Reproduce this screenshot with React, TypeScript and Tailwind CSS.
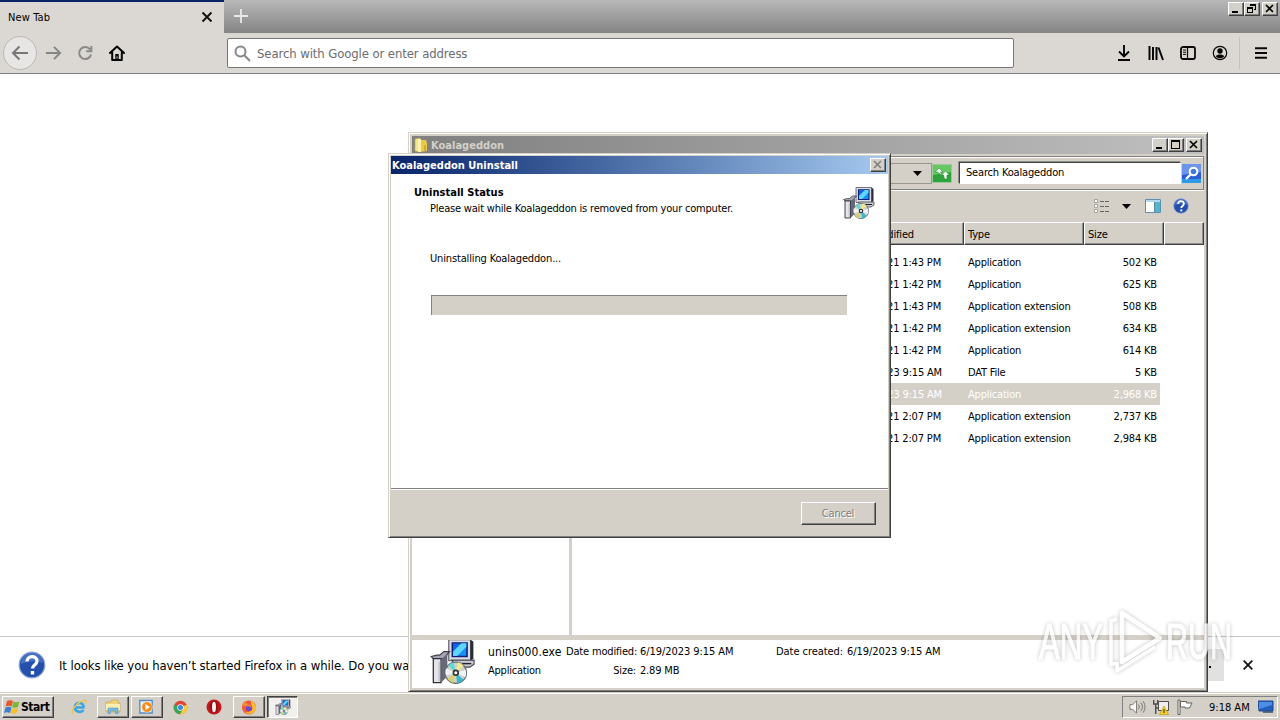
import React from "react";

const raised = "border border-t-white border-l-white border-r-[#404040] border-b-[#404040] shadow-[inset_-1px_-1px_0_#808080]";

function InstallerIcon({ className }: { className: string }) {
  return (
    <svg viewBox="0 0 32 32" className={className}>
      <path d="M13 .5h15.500v15H13z" fill="#dcdce4" stroke="#55555f" strokeWidth=".8" />
      <path d="M28.500.500l2 1.500v12l-2 1.500z" fill="#2c2c38" />
      <path d="M15.500 2.800h10.500v9.700H15.500z" fill="#1c8df4" stroke="#10207a" strokeWidth="1.100" />
      <path d="M16 12V9l6-6h3.500v2.500L19 12z" fill="#5fd6ff" />
      <path d="M16 3.300h5L16 8.500z" fill="#1560e6" />
      <path d="M15 15h16v3l-3 2h-9z" fill="#c8c8d0" stroke="#44444c" strokeWidth=".8" />
      <path d="M22 17.500h7" stroke="#20202a" />
      <path d="M.5 12.500l4-1h2l3-2.500h4l-4 5H2z" fill="#a6a6b4" stroke="#3c3c48" strokeWidth=".8" />
      <path d="M8 14l4-3.500v16l-4 4z" fill="#686878" />
      <path d="M2 14h5.500v17H2z" fill="#e4e4ea" stroke="#30303a" strokeWidth=".9" />
      <path d="M5.500 16H7v14H5.500z" fill="#a8a8b4" opacity=".5" />
      <circle cx="18" cy="24" r="7.600" fill="#cfd2cf" stroke="#687078" strokeWidth=".9" />
      <path d="M18 24L12.500 18.800A7.500 7.500 0 0 1 16.500 16.700z" fill="#62d8d0" />
      <path d="M18 24L19.500 16.600A7.500 7.500 0 0 1 23.500 19z" fill="#f1e98c" />
      <path d="M18 24L25 22A7.500 7.500 0 0 1 24.800 27z" fill="#eef5f8" />
      <path d="M18 24L23.500 29A7.500 7.500 0 0 1 19 31.400z" fill="#38b8cc" />
      <path d="M18 24L16 31.200A7.500 7.500 0 0 1 12 28.500z" fill="#d8cf68" />
      <path d="M18 24L11 26A7.500 7.500 0 0 1 11 21z" fill="#f2f2f2" />
      <circle cx="18" cy="24" r="1.700" fill="#fff" stroke="#333" strokeWidth="1.200" />
    </svg>
  );
}

function HelpIcon({ className }: { className: string }) {
  return (
    <svg viewBox="0 0 28 28" className={className}>
      <circle cx="14" cy="14" r="12.800" fill="#2450ac" stroke="#8fa6d6" strokeWidth="1.200" />
      <path d="M3 13a11 11 0 0 1 22-1c-8-3-15-2-22 1z" fill="#5b84cf" opacity=".6" />
      <path d="M9 10.500c0-6.500 10-6.500 10-.5 0 4-4.500 4-4.500 7.500" fill="none" stroke="#fff" strokeWidth="3.200" />
      <path d="M12.800 20h3.400v3.400h-3.400z" fill="#fff" />
    </svg>
  );
}

function WinButton({ kind, className = "" }: { kind: "min" | "max" | "restore" | "close"; className?: string }) {
  return (
    <div className={`flex h-[14px] w-4 items-center justify-center bg-[#d4d0c8] ${raised} ${className}`}>
      <svg viewBox="0 0 14 12" className="h-3 w-3.5 shrink-0" fill="none" stroke="currentColor" shapeRendering="crispEdges">
        {kind === "min" && <path d="M3 9h6" strokeWidth="2" />}
        {kind === "max" && <><path d="M2.500 2.500h8v7h-8z" /><path d="M2 2h9" strokeWidth="2" /></>}
        {kind === "restore" && <><path d="M5.500 1.500h5v5h-2M2.500 4.500h5v5h-5z" /><path d="M5 2h6M2 5h6" strokeWidth="1.500" /></>}
        {kind === "close" && <path d="M3 2l7 7M10 2l-7 7" strokeWidth="1.700" shapeRendering="auto" />}
      </svg>
    </div>
  );
}

function Browser() {
  return (
    <div className="flex h-[692px] flex-col bg-white">
      <div className="flex h-[33px] shrink-0 bg-linear-to-b from-[#b8b8b8] to-[#858585]">
        <div className="flex w-[224px] items-center justify-between border-t-2 border-[#0a246a] bg-[#dbd8d3] pr-[11px] pb-px pl-2">
          <span className="pt-0.5 text-[11px] tracking-[0.13px]">New Tab</span>
          <svg viewBox="0 0 12 12" className="h-3 w-3" stroke="#111" strokeWidth="1.900"><path d="M1.500 1.500l9 9M10.500 1.500l-9 9" /></svg>
        </div>
        <svg viewBox="0 0 14 14" className="mt-[9px] ml-[10px] h-3.5 w-3.5" stroke="#e8e8e8" strokeWidth="1.800"><path d="M7 0v14M0 7h14" /></svg>
        <div className="mt-[2px] mr-[2px] ml-auto flex">
          <WinButton kind="min" />
          <WinButton kind="restore" />
          <WinButton kind="close" className="ml-0.5" />
        </div>
      </div>
      <div className="flex h-[41px] shrink-0 items-center border-b border-[#828080] bg-[#dbd8d3]">
        <div className="ml-[3px] flex h-[34px] w-[34px] items-center justify-center rounded-full border border-[#bab8b5] bg-[#e8e6e4]">
          <svg viewBox="0 0 18 16" className="h-4 w-[18px]" fill="none" stroke="#777" strokeWidth="2"><path d="M17 8H2M8.500 1.500L2 8l6.500 6.500" /></svg>
        </div>
        <svg viewBox="0 0 18 16" className="ml-2 h-4 w-[17px]" fill="none" stroke="#858585" strokeWidth="2"><path d="M1 8h15M9.500 1.500L16 8l-6.500 6.500" /></svg>
        <svg viewBox="0 0 16 16" className="ml-[15px] h-4 w-4" fill="none" stroke="#898989" strokeWidth="2"><path d="M13 4.500A6 6 0 1 0 14 9.500M14.300 1v5.200H9.200" /></svg>
        <svg viewBox="0 0 16 16" className="ml-4 h-4 w-4" fill="none" stroke="#050505" strokeWidth="2" strokeLinejoin="round"><path d="M1 8l7-6.500L15 8M3.200 7.500V15h9.600V7.500" strokeLinecap="round" /><path d="M6.300 9h3.400v6H6.300z" fill="#050505" stroke="none" /><path d="M8 11.500v2" stroke="#dbd8d3" strokeWidth="1" /></svg>
        <div className="ml-[102px] flex h-[30px] w-[787px] items-center rounded-[2px] border border-[#77777a] bg-white pl-1.5">
          <svg viewBox="0 0 17 17" className="h-[17px] w-[17px]" fill="none" stroke="#85858a" strokeWidth="2"><circle cx="6.500" cy="6.500" r="5" /><path d="M10 10l6 6" /></svg>
          <span className="ml-1.5 pt-0.5 text-[13px] tracking-[-0.1px] text-[#6b6b70]">Search with Google or enter address</span>
        </div>
        <svg viewBox="0 0 14 16" className="ml-[103px] h-4 w-3.5" fill="none" stroke="#080808" strokeWidth="1.900"><path d="M7 0v11M2 6.500l5 5 5-5M1 15h12" /></svg>
        <svg viewBox="0 0 16 16" className="ml-[17px] h-4 w-4" fill="none" stroke="#080808" strokeWidth="2"><path d="M1.500 1v14M5 2v13M8.500 2v13M10.500 2.500L15 15" strokeWidth="2" /></svg>
        <svg viewBox="0 0 16 16" className="ml-4 h-4 w-4" fill="none" stroke="#080808" strokeWidth="1.800"><rect x="1" y="2" width="14" height="12" rx="2" /><path d="M7.500 2v12" strokeWidth="1.200" /><path d="M3 5h3M3 7.200h3M3 9.400h3" strokeWidth="1" /></svg>
        <svg viewBox="0 0 16 16" className="ml-4 h-4 w-4"><circle cx="8" cy="8" r="6.700" fill="none" stroke="#080808" strokeWidth="1.200" /><circle cx="8" cy="6" r="2.700" fill="#080808" /><path d="M3.800 11.200c1-2.200 7.400-2.200 8.400 0-2 2.800-6.400 2.800-8.400 0z" fill="#080808" /></svg>
        <div className="ml-[11px] h-8 w-px bg-[#c5c2be]" />
        <svg viewBox="0 0 12 12" className="ml-[15px] h-3 w-3" stroke="#080808" strokeWidth="1.900"><path d="M0 1.200h12M0 6h12M0 10.800h12" /></svg>
      </div>
      <div className="flex-1" />
      <div className="flex h-14 items-center border-t border-[#c6c6c6]">
        <HelpIcon className="ml-[18px] h-7 w-7" />
        <span className="ml-[13px] pt-0.5 text-[13px] tracking-[-0.09px] whitespace-nowrap">It looks like you haven’t started Firefox in a while. Do you want</span>
        <div className="mr-[19px] ml-auto flex h-8 w-14 items-center justify-end bg-[#e1e1e1] pr-[13px]">
          <div className="h-0.5 w-0.5 translate-y-0.5 bg-black" />
        </div>
        <svg viewBox="0 0 10 10" className="mr-[27px] h-2.5 w-2.5" stroke="#111" strokeWidth="1.700"><path d="M.7.700l8.600 8.600M9.300.700L.7 9.300" /></svg>
      </div>
    </div>
  );
}

const files = [
  ["8/22/2021 1:43 PM", "Application", "502 KB"],
  ["8/22/2021 1:42 PM", "Application", "625 KB"],
  ["8/22/2021 1:43 PM", "Application extension", "508 KB"],
  ["8/22/2021 1:42 PM", "Application extension", "634 KB"],
  ["8/22/2021 1:42 PM", "Application", "614 KB"],
  ["6/19/2023 9:15 AM", "DAT File", "5 KB"],
  ["6/19/2023 9:15 AM", "Application", "2,968 KB"],
  ["8/22/2021 2:07 PM", "Application extension", "2,737 KB"],
  ["8/22/2021 2:07 PM", "Application extension", "2,984 KB"],
];

const headCell = "flex items-center border-t border-l border-t-white border-l-white border-r border-b border-r-[#404040] border-b-[#404040] shadow-[inset_-1px_-1px_0_#909090] pt-[3px]";

function Explorer() {
  return (
    <div className="absolute top-[132px] left-[408px] flex h-[560px] w-[800px] flex-col border border-t-[#d4d0c8] border-r-[#404040] border-b-[#404040] border-l-[#d4d0c8] bg-[#d4d0c8] text-[11px] tracking-[-0.17px] shadow-[inset_1px_1px_0_#fff,inset_-1px_-1px_0_#808080]">
      <div className="mx-[3px] mt-[3px] flex h-[18px] shrink-0 items-center bg-linear-to-r from-[#808080] to-[#c0c0c0] pr-[2px] pl-[2px]">
        <svg viewBox="0 0 14 16" className="h-4 w-3.5"><path d="M1 2l5-1v14l-5-1z" fill="#f7e38b" stroke="#c7a53d" strokeWidth=".6" /><path d="M6 3h6l1 3v8l-7 1z" fill="#e9c94c" /><path d="M4 2h3v13H4z" fill="#fff3b0" /><path d="M10 8h2v6h-2z" fill="#d2ab31" /></svg>
        <span className="ml-[3px] pt-[2px] font-bold tracking-[0.02px] text-[#d4d0c8]">Koalageddon</span>
        <div className="ml-auto flex">
          <WinButton kind="min" />
          <WinButton kind="max" />
          <WinButton kind="close" className="ml-0.5" />
        </div>
      </div>
      <div className="mx-[3px] mt-0.5 flex h-[34px] shrink-0 items-center justify-end border border-t-[#808080] border-r-[#808080] border-b-[#808080] border-l-white shadow-[0_1px_0_#fff,inset_0_1px_0_#fff]">
        <div className="flex h-[21px] w-[400px] items-center justify-end border border-[#9a9791] pr-[9px]">
          <svg viewBox="0 0 9 5" className="h-[5px] w-[9px]"><path d="M0 0h9L4.500 5z" /></svg>
        </div>
        <svg viewBox="0 0 20 19" className="h-[19px] w-5"><path d="M.5.500h19v18H.5z" fill="#2fa33b" stroke="#9bc79b" /><path d="M1 1h18v7L1 11z" fill="#68c765" /><path d="M7 4l4 4H8.500l2 4-5-4H3z" fill="#f4fff4" stroke="#2a8a34" strokeWidth=".6" /><path d="M13.500 7l4 4H15v4h-2.500l-1-4H9.500z" fill="#f4fff4" stroke="#2a8a34" strokeWidth=".6" /></svg>
        <div className="ml-[7px] flex h-[22px] w-[222px] items-center border border-t-[#404040] border-r-white border-b-white border-l-[#404040] bg-white pt-px pl-[6px] shadow-[-1px_-1px_0_#909090]">Search Koalageddon</div>
        <svg viewBox="0 0 19 19" className="mr-[2px] ml-px h-[19px] w-[19px]"><path d="M0 0h19v19H0z" fill="#2a5ed4" /><path d="M0 0h19v8L0 11z" fill="#6c94ea" /><path d="M0 15h19v4H0z" fill="#2f9ae6" /><circle cx="11.500" cy="7.500" r="3.800" fill="#3f78e0" stroke="#fff" strokeWidth="2" /><path d="M8.500 10.500L4 15" stroke="#fff" strokeWidth="2.400" /></svg>
      </div>
      <div className="flex h-8 shrink-0 items-center justify-end pr-[18px]">
        <svg viewBox="0 0 16 14" className="h-3.5 w-4" fill="none"><path d="M.5.500h3v3h-3zM.5 5.500h3v3h-3zM.5 10.500h3v3h-3z" fill="#fff" stroke="#a6a49f" /><path d="M6 2.500h9M6 7.500h9M6 12.500h9" stroke="#66645f" strokeDasharray="4 1" /></svg>
        <svg viewBox="0 0 9 5" className="ml-[12px] h-[5px] w-[9px]"><path d="M0 0h9L4.500 5z" /></svg>
        <svg viewBox="0 0 16 14" className="ml-[14px] h-3.5 w-4"><path d="M.5.500h15v13H.5z" fill="#fff" stroke="#5d8fb2" /><path d="M10 3h5v10h-5z" fill="#4db7cc" /><path d="M1 1h14v2H1z" fill="#b8d8ee" /><path d="M9.500 3v10" stroke="#62849a" /></svg>
        <HelpIcon className="ml-[12px] h-4 w-4" />
      </div>
      <div className="mx-[3px] flex min-h-0 flex-1">
        <div className="w-[157px] bg-white" />
        <div className="w-[3px] bg-[#d4d0c8]" />
        <div className="flex-1 bg-white">
          <div className="flex h-[23px] bg-[#d4d0c8]">
            <div className={`${headCell} w-[252px] pl-1`}>Name</div>
            <div className={`${headCell} w-[140px] pl-[21px]`}>Date modified</div>
            <div className={`${headCell} w-[120px] pl-[3px]`}>Type</div>
            <div className={`${headCell} w-[80px] pl-[3px]`}>Size</div>
            <div className={`${headCell} flex-1`} />
          </div>
          <div className="mt-[6px] w-[588px]">
            {files.map(([date, type, size], i) => (
              <div key={i} className={`flex h-[22px] items-center pt-0.5 ${i === 6 ? "bg-[#d4d0c8] text-white" : ""}`}>
                <span className={`w-[369px] text-right whitespace-nowrap ${date.endsWith("AM") ? "translate-x-px" : ""}`}>{date}</span>
                <span className="ml-[27px] flex-1 tracking-[-0.2px] whitespace-nowrap">{type}</span>
                <span className="mr-[3px]">{size}</span>
              </div>
            ))}
          </div>
        </div>
      </div>
      <div className="mx-[3px] mb-[3px] flex h-[53px] shrink-0 overflow-hidden border-t-[5px] border-[#d4d0c8] bg-white">
        <InstallerIcon className="mt-[-1px] ml-[18px] h-[45px] w-[46px] shrink-0" />
        <div className="ml-[12px] w-[78px] whitespace-nowrap">
          <div className="mt-[3px] h-[18px] text-[12px] leading-[18px] tracking-[0.1px]">unins000.exe</div>
          <div className="h-[19px] leading-[19px] tracking-[-0.22px]">Application</div>
        </div>
        <div className="w-[70px] text-right whitespace-nowrap">
          <div className="mt-[3px] h-[18px] leading-[18px]">Date modified:</div>
          <div className="h-[19px] leading-[19px]">Size:</div>
        </div>
        <div className="ml-[4px] w-[136px] whitespace-nowrap">
          <div className="mt-[3px] h-[18px] leading-[18px] tracking-[-0.06px]">6/19/2023 9:15 AM</div>
          <div className="h-[19px] leading-[19px]">2.89 MB</div>
        </div>
        <div className="mt-[3px] w-[71px] leading-[18px] tracking-[-0.06px] whitespace-nowrap">Date created:</div>
        <div className="mt-[3px] leading-[18px] tracking-[-0.06px] whitespace-nowrap">6/19/2023 9:15 AM</div>
      </div>
    </div>
  );
}

function UninstallDialog() {
  return (
    <div className="absolute top-[153px] left-[388px] flex h-[385px] w-[503px] flex-col border border-t-[#d4d0c8] border-r-[#404040] border-b-[#404040] border-l-[#d4d0c8] bg-[#d4d0c8] pt-[2px] pr-[2px] pb-px pl-[2px] text-[11px] tracking-[-0.2px] shadow-[inset_1px_1px_0_#fff,inset_-1px_-1px_0_#808080]">
      <div className="flex h-[18px] shrink-0 items-center bg-linear-to-r from-[#0a246a] to-[#a6caf0] pr-0.5 pl-px">
        <span className="pt-0.5 font-bold tracking-[0px] text-white">Koalageddon Uninstall</span>
        <WinButton kind="close" className="ml-auto text-[#808080]" />
      </div>
      <div className="flex flex-1 flex-col bg-white">
        <div className="flex h-[72px] justify-between pr-[13px] pl-[23px]">
          <div className="whitespace-nowrap">
            <div className="mt-[11px] leading-4 font-bold tracking-[0.02px]">Uninstall Status</div>
            <div className="ml-4 leading-4">Please wait while Koalageddon is removed from your computer.</div>
          </div>
          <InstallerIcon className="mt-[13px] h-8 w-8" />
        </div>
        <div className="ml-[39px] h-[49px] pt-[5px] leading-4 tracking-[-0.15px]">Uninstalling Koalageddon...</div>
        <div className="ml-10 h-5 w-[416px] border-t border-l border-[#808080] bg-[#d4d0c8]" />
      </div>
      <div className="flex h-[48px] shrink-0 items-center justify-end border-t border-[#808080] pt-px pr-[12px] shadow-[inset_0_1px_0_#fff]">
        <div className={`flex h-[23px] w-[75px] items-center justify-center bg-[#d4d0c8] text-[#808080] [text-shadow:1px_1px_0_#fff] ${raised}`}><span className="pt-0.5 pr-px">Cancel</span></div>
      </div>
    </div>
  );
}

function Watermark() {
  return (
    <svg viewBox="0 0 210 80" className="absolute top-[602px] left-[1030px] h-20 w-[210px] opacity-75 [filter:drop-shadow(0_0_2px_rgba(0,0,0,0.32))]">
      <g fill="#fff" stroke="#fff" strokeWidth="1.200" fontFamily="'Liberation Sans', sans-serif" fontSize="50">
        <text x="9" y="57" textLength="64" lengthAdjust="spacingAndGlyphs">ANY</text>
        <text x="136" y="57" textLength="66" lengthAdjust="spacingAndGlyphs">RUN</text>
      </g>
      <g fill="none" stroke="#fff" strokeWidth="4.500" strokeLinejoin="round">
        <path d="M92 11l38 25-38 24z" />
        <path d="M87 17l-6 2v44l5-2M87 60v9l38-24" strokeWidth="3.500" />
      </g>
    </svg>
  );
}

function Taskbar() {
  return (
    <div className="relative flex h-7 items-center bg-[#d4d0c8] pt-[3px] pb-px pl-0.5 text-[11px] shadow-[inset_0_1px_0_#d4d0c8,inset_0_2px_0_#fff]">
      <div className={`flex h-[22px] w-[52px] items-center ${raised}`}>
        <svg viewBox="0 0 17 16" className="ml-px h-4 w-[17px]"><path d="M3 2c2-1 4-1 6 0L7.500 7.500c-2-1-4-1-6 0z" fill="#e5582b" /><path d="M9.500 2.500c2 1 4 1 6 0L14 8c-2 1-4 1-6 0z" fill="#7bb83a" /><path d="M1.500 8.500c2-1 4-1 6 0L6 14c-2-1-4-1-6 0z" fill="#3c7fd0" /><path d="M8 9c2 1 4 1 6 0l-1.500 5c-2 1-4 1-6 0z" fill="#f6c02c" /></svg>
        <span className="text-[12px] font-bold tracking-[-0.45px]">Start</span>
      </div>
      <svg viewBox="0 0 18 18" className="ml-4 h-[18px] w-[18px]" fill="none"><path d="M14.500 9.500H5c0 5 6.500 5.500 8.500 2.500M5 8.500c.5-4.500 8-5 8.800.5" stroke="#3aa5e3" strokeWidth="2.600" /><path d="M3 15.500C-1 15 8 2 15.500 2.500c1 .3.700 2 0 3" stroke="#eec34a" strokeWidth="1.400" /></svg>
      <div className={`ml-[9px] flex h-[22px] w-[32px] items-center justify-center ${raised}`}>
        <svg viewBox="0 0 16 16" className="h-4 w-4"><path d="M1 3h5l1-2h6v3h2v9H1z" fill="#edd27a" stroke="#c3a146" strokeWidth=".6" /><path d="M1 5h14v6H1z" fill="#faeeb0" /><path d="M3 14.500V9h10v5.500h-2.500V12h-5v2.500z" fill="#79b8e0" stroke="#5c94c0" strokeWidth=".6" /></svg>
      </div>
      <div className={`ml-[2px] flex h-[22px] w-[32px] items-center justify-center ${raised}`}>
        <svg viewBox="0 0 16 16" className="h-4 w-4"><path d="M.8 1.500h12.400V14H.8z" fill="#e5eef8" stroke="#538bc8" strokeWidth="1.300" /><circle cx="8" cy="8" r="5.300" fill="#f48b1c" stroke="#fff0c8" strokeWidth=".6" /><path d="M6.500 5l4.500 3-4.500 3z" fill="#fff" /></svg>
      </div>
      <svg viewBox="0 0 16 16" className="ml-[10px] h-[15px] w-[15px]"><circle cx="8" cy="8" r="7.300" fill="#e14534" /><path d="M8 8L1.500 4.700A7.300 7.300 0 0 0 7.500 15.300L10.500 9.500z" fill="#3ba457" /><path d="M8 8l6.600-3A7.300 7.300 0 0 1 7.500 15.300L11 9z" fill="#f7cd38" /><circle cx="8" cy="8" r="3.500" fill="#f1f4f4" /><circle cx="8" cy="8" r="2.700" fill="#4085da" /></svg>
      <svg viewBox="0 0 16 16" className="ml-[18px] h-4 w-4"><ellipse cx="8" cy="8" rx="7.500" ry="7.500" fill="#c2161b" /><ellipse cx="8" cy="8" rx="4.200" ry="6.200" fill="#951015" /><ellipse cx="8" cy="8" rx="2" ry="5.300" fill="#fff0ef" /></svg>
      <div className={`ml-[11px] flex h-[22px] w-[32px] items-center justify-center ${raised}`}>
        <svg viewBox="0 0 16 16" className="h-4 w-4"><circle cx="8" cy="8.500" r="7" fill="#f05a37" /><path d="M10 1c2 2 5 4 5 8 0 5-7 8-11 4 7 1 9-4 6-8z" fill="#fdbd31" /><path d="M1 6l2-4 3 3 3 1-3 2z" fill="#f98b30" /><circle cx="8" cy="9" r="3.200" fill="#7544c2" /><path d="M5 8c3-2 5 0 6 1-1-4-4-4-6-1z" fill="#ef8f4b" /></svg>
      </div>
      <div className="ml-[2px] flex h-[22px] w-[31px] items-center justify-center border border-t-[#404040] border-r-white border-b-white border-l-[#404040] bg-[#f2f0ed] shadow-[inset_1px_1px_0_#808080]">
        <InstallerIcon className="h-4 w-4" />
      </div>
      <div className="mr-0.5 ml-auto flex h-[22px] w-[156px] items-center border border-t-[#808080] border-r-white border-b-white border-l-[#808080]">
        <svg viewBox="0 0 18 16" className="ml-[6px] h-4 w-[17px]" fill="none" stroke="#77756f"><path d="M1 5.500h3l4-4v13l-4-4H1z" fill="#fff" /><path d="M10 5.500q2 2.500 0 5M12.500 3.500q3.500 4.500 0 9M15 2q4 6 0 12" /></svg>
        <svg viewBox="0 0 16 16" className="ml-[7px] h-4 w-4" fill="none" stroke="#4e4e4e"><path d="M5.500 2.500h10v9h-10z" fill="#eee" /><path d="M.7 1v4h4V1M2.700 5v10M2.700 9h3" strokeWidth="1.400" /><path d="M11 7l4.500 8.500h-9z" fill="#f8d22a" stroke="#bf980d" strokeWidth=".7" /><path d="M11 10v4" stroke="#222" /></svg>
        <svg viewBox="0 0 16 16" className="ml-[8px] h-4 w-4" fill="#fff" stroke="#65635f"><path d="M1 1h2v14.500H1zM3.500 2.500h6v1.500H15l-2.500 5H8V8H3.500z" /></svg>
        <span className="ml-[16px] pt-0.5 tracking-[0px] whitespace-nowrap">9:18 AM</span>
        <svg viewBox="0 0 16 14" className="mr-[3px] ml-auto h-[14px] w-4 shrink-0"><path d="M0 1h15v10H1z" fill="#225fbd" stroke="#204a91" /><path d="M1 2h13v3L1 9z" fill="#4d8ee6" /><path d="M5 12h10" stroke="#37516c" strokeWidth="1.500" /></svg>
      </div>
    </div>
  );
}

export default function App() {
  return (
    <div className="relative h-[720px] w-[1280px] overflow-hidden text-black [font-family:'DejaVu_Sans_Condensed','DejaVu_Sans',sans-serif]">
      <Browser />
      <Explorer />
      <UninstallDialog />
      <Taskbar />
      <Watermark />
    </div>
  );
}
